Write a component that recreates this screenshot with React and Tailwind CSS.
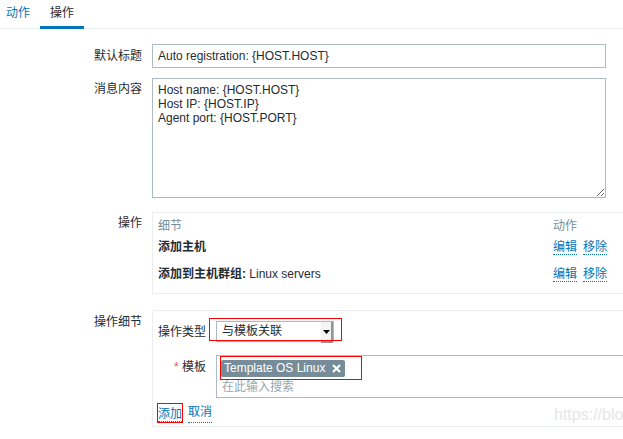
import React from 'react';

const rows = [
  { label: '添加主机', bold: '', rest: '' },
  { label: '', bold: '添加到主机群组:', rest: ' Linux servers' },
];

const LinkBtn = ({ children }) => (
  <span className="text-[#0275b8] border-b border-dotted border-[#0275b8] leading-[14px]">{children}</span>
);

const App = () => {
  return (
    <div className="relative h-[439px] w-full overflow-hidden bg-white text-[12px] text-[#1f2c33] font-['Liberation_Sans','Noto_Sans_CJK_SC',sans-serif]">
      {/* tabs */}
      <div className="flex h-[29px] border-b border-[#ebeef0]">
        <div className="pl-[6px] pr-[10px] leading-[26px] text-[#0275b8]">动作</div>
        <div className="-mb-px h-[29px] border-b-[3px] border-[#0275b8] px-[10px] leading-[26px]">操作</div>
      </div>

      <div className="pt-[15px]">
        {/* 默认标题 */}
        <div className="flex">
          <div className="w-[142px] shrink-0 text-right leading-[24px]">默认标题</div>
          <input
            readOnly
            value="Auto registration: {HOST.HOST}"
            className="ml-[10px] h-[24px] w-[454px] shrink-0 border border-[#acbbc2] px-[5px] text-[12px] text-[#1f2c33] outline-none"
          />
        </div>

        {/* 消息内容 */}
        <div className="mt-[10px] flex">
          <div className="w-[142px] shrink-0 pt-[4px] text-right leading-[14px]">消息内容</div>
          <textarea
            readOnly
            value={'Host name: {HOST.HOST}\nHost IP: {HOST.IP}\nAgent port: {HOST.PORT}'}
            className="ml-[10px] h-[120px] w-[454px] shrink-0 border border-[#acbbc2] px-[5px] pt-[4px] text-[12px] leading-[14px] text-[#1f2c33] outline-none"
          />
        </div>

        {/* 操作 */}
        <div className="mt-[14px] flex">
          <div className="w-[142px] shrink-0 pt-[4px] text-right leading-[14px]">操作</div>
          <div className="ml-[10px] w-[490px] shrink-0 border border-r-0 border-[#ebeef0] pb-[11px] pl-[5px] pt-[6px]">
            <div className="flex leading-[14px] text-[#768d99]">
              <div className="w-[395px] shrink-0">细节</div>
              <div>动作</div>
            </div>
            {rows.map((r, i) => (
              <div key={i} className={`flex leading-[14px] ${i === 0 ? 'mt-[7px]' : 'mt-[12px]'}`}>
                <div className="w-[395px] shrink-0">
                  {r.label && <span className="font-bold">{r.label}</span>}
                  {r.bold && <span className="font-bold">{r.bold}</span>}
                  {r.rest}
                </div>
                <div className="flex gap-[6px]">
                  <LinkBtn>编辑</LinkBtn>
                  <LinkBtn>移除</LinkBtn>
                </div>
              </div>
            ))}
          </div>
        </div>

        {/* 操作细节 */}
        <div className="mt-[16px] flex">
          <div className="w-[142px] shrink-0 pt-[5px] text-right leading-[14px]">操作细节</div>
          <div className="ml-[10px] h-[117px] w-[490px] shrink-0 border border-r-0 border-[#ebeef0] pl-[5px] pt-[10px]">
            {/* 操作类型 */}
            <div className="flex">
              <div className="w-[48px] shrink-0 text-right leading-[22px]">操作类型</div>
              <div className="relative ml-[10px]">
                <div className="flex h-[21px] w-[118px] border border-[#acbbc2] bg-white">
                  <div className="flex-1 pl-[5px] leading-[19px]">与模板关联</div>
                  <div className="flex h-[21px] w-[12px] items-center justify-center border-b-2 border-r-2 border-[#8e9396] bg-[#f4f4f4]">
                    <svg width="7" height="4" viewBox="0 0 7 4">
                      <path d="M0 0h7L3.5 4z" fill="#000" />
                    </svg>
                  </div>
                </div>
                <div className="pointer-events-none absolute left-[-7px] top-[-3px] h-[23px] w-[133px] border border-[#ff0000]" />
              </div>
            </div>

            {/* 模板 */}
            <div className="mt-[12px] flex">
              <div className="w-[48px] shrink-0 pt-[5px] text-right leading-[14px]">
                <span className="text-[#e45959]">*</span> 模板
              </div>
              <div className="ml-[10px] h-[43px] flex-1 border border-r-0 border-[#acbbc2] pl-[4px] pt-[3px]">
                <div className="relative inline-flex">
                  <div className="flex h-[17px] items-center gap-[7px] rounded-[2px] bg-[#768d99] pl-[3px] pr-[4px] text-white">
                    <span className="leading-[17px]">Template OS Linux</span>
                    <svg width="9" height="9" viewBox="0 0 9 9">
                      <path d="M1 1l7 7M8 1L1 8" stroke="#fff" strokeWidth="2.2" />
                    </svg>
                  </div>
                  <div className="pointer-events-none absolute left-[-1px] top-[-4px] h-[24px] w-[142px] border border-[#ff0000]" />
                </div>
                <div className="mt-[3px] pl-[1px] leading-[14px] text-[#9aa7ae]">在此输入搜索</div>
              </div>
            </div>

            {/* buttons */}
            <div className="mt-[7px] flex gap-[6px]">
              <div className="relative">
                <LinkBtn>添加</LinkBtn>
                <div className="pointer-events-none absolute left-[-1px] top-[-2px] h-[20px] w-[26px] border border-[#ff0000]" />
              </div>
              <LinkBtn>取消</LinkBtn>
            </div>
          </div>
        </div>
      </div>

      {/* watermark */}
      <div className="pointer-events-none absolute left-[554px] top-[403px] whitespace-nowrap text-[16px] text-[#e6e6e6]">
        https://blo
      </div>
    </div>
  );
};

export default App;
